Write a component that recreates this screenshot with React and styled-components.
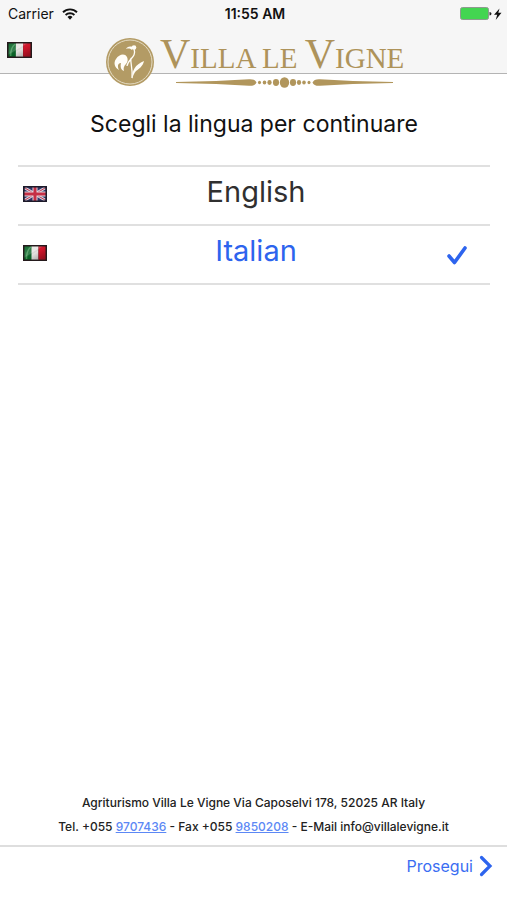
import React, { useState } from 'react';
import styled, { createGlobalStyle } from 'styled-components';

const GlobalStyle = createGlobalStyle`
  * {
    box-sizing: border-box;
  }

  body {
    margin: 0;
    background: #fff;
    color: #111;
    font-family: Inter, 'Liberation Sans', sans-serif;
  }
`;

const Page = styled.div`
  display: flex;
  flex-direction: column;
  min-height: 100vh;
`;

const Header = styled.header`
  position: relative;
  height: 74px;
  background: #f6f6f6;
  border-bottom: 1px solid #b4b4b4;
`;

const StatusBar = styled.div`
  display: grid;
  grid-template-columns: 1fr auto 1fr;
  align-items: center;
  height: 27px;
  padding: 0 5px 0 8px;
  font-size: 14px;
`;

const Carrier = styled.span`
  display: flex;
  align-items: center;
  gap: 8px;
`;

const Time = styled.span`
  font-weight: 600;
`;

const Battery = styled.span`
  display: flex;
  justify-content: flex-end;
`;

const LanguageButton = styled.button`
  display: flex;
  margin: 0;
  padding: 15px 7px;
  border: 0;
  background: none;
  cursor: pointer;
`;

const StyledLogo = styled.svg`
  position: absolute;
  top: 28px;
  left: 50%;
  margin-left: -149px;
`;

const Main = styled.main`
  flex: 1;
  padding: 33px 17px 0 18px;
`;

const Title = styled.h1`
  margin: 0 0 24px;
  font-size: 23px;
  font-weight: 400;
  line-height: 34px;
  text-align: center;
`;

const Languages = styled.div`
  border-top: 2px solid #e0e0e0;
`;

const Language = styled.label`
  display: grid;
  grid-template-columns: 24px 1fr 24px;
  align-items: center;
  height: 59px;
  padding: 0 21px 4px 5px;
  border-bottom: 2px solid #e0e0e0;
  color: ${({ $selected }) => ($selected ? '#2d64ee' : '#303030')};
  cursor: pointer;
`;

const Name = styled.span`
  padding: 0 0 4px 20px;
  font-size: 29px;
  line-height: 36px;
  text-align: center;
`;

const Radio = styled.input`
  position: absolute;
  opacity: 0;
  pointer-events: none;
`;

const Contacts = styled.address`
  padding: 0 8px 6px;
  color: #222;
  font-size: 12px;
  font-style: normal;
  font-weight: 500;
  line-height: 24px;
  text-align: center;
`;

const Phone = styled.a`
  color: #5c88f5;
`;

const Toolbar = styled.footer`
  display: flex;
  justify-content: flex-end;
  align-items: flex-start;
  height: 55px;
  padding: 8px 14px;
  border-top: 2px solid #dedede;
`;

const NextButton = styled.button`
  display: flex;
  align-items: center;
  gap: 6px;
  padding: 0;
  border: 0;
  background: none;
  color: #3a6df2;
  font-family: inherit;
  font-size: 16px;
  line-height: 22px;
  cursor: pointer;
`;

const ItalianFlag = ({ width = 24, height = 16 }) => (
  <svg width={width} height={height} viewBox="0 0 24 16" preserveAspectRatio="none" aria-hidden="true">
    <defs>
      <linearGradient id="shine" x1="0" y1="0" x2="1" y2="1">
        <stop offset="0" stopColor="#fff" stopOpacity="0.05" />
        <stop offset="0.4" stopColor="#fff" stopOpacity="0.2" />
        <stop offset="0.5" stopColor="#000" stopOpacity="0" />
        <stop offset="1" stopColor="#000" stopOpacity="0.35" />
      </linearGradient>
    </defs>
    <path fill="#241a1c" d="M0 0h24v16H0z" />
    <path fill="#0a6427" d="M1.5 1.5H9v13H1.5z" />
    <path fill="#e4e2df" d="M8.5 1.5h7v13h-7z" />
    <path fill="#d3152b" d="M15.5 1.5h7v13h-7z" />
    <path fill="none" stroke="#55a866" strokeWidth="1.5" opacity="0.7" d="M3.5 14C3.5 7 5 4 8 2" />
    <path fill="url(#shine)" d="M1.5 1.5h21v13h-21z" />
  </svg>
);

const BritishFlag = () => (
  <svg width="24" height="16" viewBox="0 0 24 16" aria-hidden="true">
    <path fill="#303567" d="M0 0h24v16H0z" />
    <path stroke="#d5cedb" strokeWidth="3" d="M2 2l20 12M22 2L2 14" />
    <path stroke="#c13b50" strokeWidth="1" d="M2 2l20 12M22 2L2 14" />
    <path stroke="#e2d5dc" strokeWidth="5" d="M12 1v14M1 8h22" />
    <path stroke="#c52f45" strokeWidth="3" d="M12 1v14M1 8h22" />
    <path fill="none" stroke="#1d1a29" strokeWidth="1.5" d="M.75.75h22.5v14.5H.75z" />
  </svg>
);

const WifiIcon = () => (
  <svg width="16" height="12" viewBox="0 0 16 12" aria-hidden="true">
    <g fill="none" stroke="#111" strokeWidth="1.9">
      <path d="M1 4.200a10 10 0 0 1 14 0" />
      <path d="M3.600 7a6.400 6.400 0 0 1 8.800 0" />
    </g>
    <path fill="#111" d="M5.500 9a3.700 3.700 0 0 1 5 0L8 11.800z" />
  </svg>
);

const BatteryIcon = () => (
  <svg width="42" height="14" viewBox="0 0 42 14" aria-hidden="true">
    <rect x="0.5" y="0.5" width="28" height="12" rx="2" fill="#43d551" stroke="#8e9a8f" />
    <path fill="#222" d="M29.5 5q2 0 2 1.7t-2 1.7z" />
    <path fill="#111" d="M39.5 1.5L34 7.7h3.200l-1.500 5.300 5.800-7.200h-3.200z" />
  </svg>
);

const CheckIcon = () => (
  <svg width="24" height="24" viewBox="0 0 24 24" aria-hidden="true">
    <path
      fill="none"
      stroke="#2d64ee"
      strokeWidth="3.6"
      strokeLinecap="round"
      strokeLinejoin="round"
      d="M4 15l5.5 6.5L20 7"
    />
  </svg>
);

const ChevronIcon = () => (
  <svg width="14" height="22" viewBox="0 0 14 22" aria-hidden="true">
    <path fill="none" stroke="#2d64ee" strokeWidth="3.2" strokeLinecap="round" d="M2.5 2.5L11 11l-8.5 8.5" />
  </svg>
);

const beads = [
  [154.5, 1.7], [159.5, 2], [164.5, 2.4], [171, 3.4], [179.5, 5.2],
  [188, 3.4], [194, 2.4], [199, 2], [204, 1.7],
];

const Logo = () => (
  <StyledLogo width="302" height="62" viewBox="0 -6 302 62" role="img" aria-label="Villa le Vigne">
    <circle cx="25" cy="28" r="24" fill="#b39b65" />
    <circle cx="25" cy="28" r="22" fill="none" stroke="#e5dcc4" strokeWidth="1" />
    <g fill="#fffdf7">
      <path d="M19 37c-3-1-4-4-3-8-3 0-4 3-2 7-4-2-6-7-3-11 3-5 9-6 11-2 1 2 1 5-1 7-2 2-3 4-2 7z" />
      <circle cx="29" cy="13.5" r="2.3" />
      <path d="M28 13c-4-1-6 0-7 2 3-1 5 0 6 1z" />
      <path d="M27 45c0-9 3-14 12-18-1 5-5 8-8 10-2 2-3 5-4 8z" />
    </g>
    <path fill="none" stroke="#fffdf7" strokeWidth="1.3" d="M29 15c3 8-6 10-7 17M26 24c-1 5 2 10 1 20" />
    <text x="55" y="34" fill="#ae935a" fontFamily="'Liberation Serif', serif" fontSize="29">
      <tspan fontSize="42">V</tspan>ILLA LE <tspan fontSize="42">V</tspan>IGNE
    </text>
    <g fill="#b1965c">
      <path d="M71 48l40-1 33-1.800q6-.4 7.500 3.300-1.500 3.700-7.500 3.300L111 50l-40-1z" />
      <path d="M288 48l-40-1-33-1.800q-6-.4-7.500 3.300 1.500 3.700 7.500 3.300L248 50l40-1z" />
      {beads.map(([x, r]) => <ellipse key={x} cx={x} cy="48.5" rx={r * 0.9} ry={r} />)}
    </g>
  </StyledLogo>
);

const languages = [
  { name: 'English', Flag: BritishFlag },
  { name: 'Italian', Flag: ItalianFlag },
];

const App = () => {
  const [selected, setSelected] = useState('Italian');

  return (
    <Page>
      <GlobalStyle />
      <Header>
        <StatusBar>
          <Carrier>
            Carrier
            <WifiIcon />
          </Carrier>
          <Time>11:55 AM</Time>
          <Battery>
            <BatteryIcon />
          </Battery>
        </StatusBar>
        <LanguageButton type="button" aria-label="Lingua">
          <ItalianFlag width={25} />
        </LanguageButton>
        <Logo />
      </Header>
      <Main>
        <Title id="title">Scegli la lingua per continuare</Title>
        <Languages role="radiogroup" aria-labelledby="title">
          {languages.map(({ name, Flag }) => (
            <Language key={name} htmlFor={name} $selected={selected === name}>
              <Flag />
              <Name>{name}</Name>
              <Radio
                type="radio"
                id={name}
                name="language"
                checked={selected === name}
                onChange={() => setSelected(name)}
              />
              {selected === name && <CheckIcon />}
            </Language>
          ))}
        </Languages>
      </Main>
      <Contacts>
        <div>Agriturismo Villa Le Vigne Via Caposelvi 178, 52025 AR Italy</div>
        <div>
          Tel. +055 <Phone href="tel:0559707436">9707436</Phone>
          {' - Fax +055 '}
          <Phone href="tel:0559850208">9850208</Phone>
          {' - E-Mail info@villalevigne.it'}
        </div>
      </Contacts>
      <Toolbar>
        <NextButton type="button">
          Prosegui
          <ChevronIcon />
        </NextButton>
      </Toolbar>
    </Page>
  );
};

export default App;
